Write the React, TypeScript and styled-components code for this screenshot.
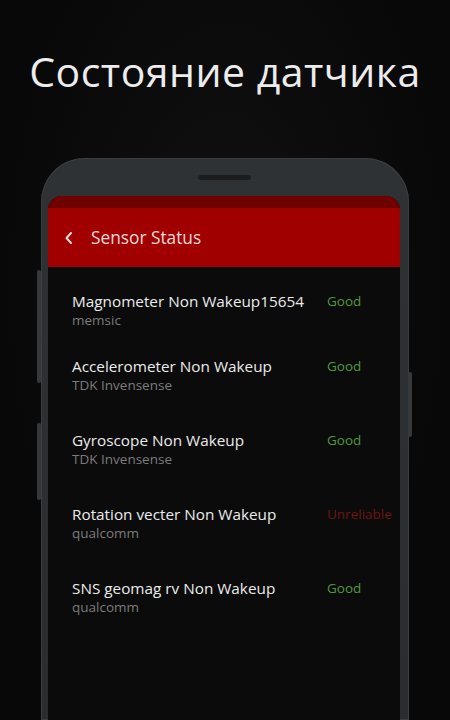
import styled, { createGlobalStyle } from 'styled-components';

const GlobalStyle = createGlobalStyle`
  html, body {
    margin: 0;
    padding: 0;
    background: #080808;
  }
  * {
    box-sizing: border-box;
  }
`

const Page = styled.div`
  width: 450px;
  height: 720px;
  overflow: hidden;
  background: radial-gradient(ellipse at 50% 40%, #111 0%, #080808 70%);
  display: flex;
  flex-direction: column;
  align-items: center;
  font-family: 'Open Sans', 'Noto Sans', sans-serif;
`

const Headline = styled.h1`
  margin: 0;
  padding-top: 49px;
  height: 158px;
  font-family: 'Open Sans', 'Noto Sans', sans-serif;
  font-weight: 400;
  font-size: 41px;
  line-height: 44px;
  color: #ececec;
  letter-spacing: 0.5px;
  white-space: nowrap;
`

const PhoneFrame = styled.div`
  position: relative;
  width: 368px;
  flex: 1;
  padding: 38px 9px 0 7px;
  border-radius: 44px 44px 0 0;
  background: linear-gradient(180deg, #2e3234 0%, #2a2d2f 100%);
  box-shadow: inset 0 0 0 1px #3a3e40;
`

const SideButton = styled.div<{ $side: 'left' | 'right'; $top: number; $height: number }>`
  position: absolute;
  ${p => (p.$side === 'left' ? 'left: -4px;' : 'right: -3px;')}
  top: ${p => p.$top}px;
  width: 4px;
  height: ${p => p.$height}px;
  border-radius: 2px;
  background: #35393b;
`

const Speaker = styled.div`
  position: absolute;
  top: 17px;
  left: 157px;
  width: 53px;
  height: 5px;
  border-radius: 3px;
  background: #1b1d1e;
`

const Screen = styled.div`
  height: 100%;
  border-radius: 14px 14px 0 0;
  overflow: hidden;
  background: #0b0b0b;
  display: flex;
  flex-direction: column;
`

const StatusBar = styled.div`
  height: 12px;
  background: #6f0000;
`

const AppBar = styled.div`
  height: 59px;
  background: #a00000;
  display: flex;
  align-items: center;
  gap: 17px;
  padding-left: 16px;
  color: #f6dada;
`

const AppTitle = styled.span`
  font-family: 'Open Sans', 'Noto Sans', sans-serif;
  font-size: 17.3px;
  font-weight: 400;
`

const List = styled.div`
  padding-top: 24px;
  display: flex;
  flex-direction: column;
`

const Row = styled.div`
  display: flex;
  align-items: flex-start;
  height: 74px;
  padding-left: 24px;

  &:first-child {
    height: 65px;
  }
`

const Info = styled.div`
  width: 255px;
  display: flex;
  flex-direction: column;
`

const Name = styled.div`
  font-size: 15.3px;
  line-height: 20px;
  color: #ebebeb;
  white-space: nowrap;
`

const Vendor = styled.div`
  font-size: 13.5px;
  line-height: 18px;
  color: #7c7c7c;
`

const Status = styled.div<{ $ok: boolean }>`
  font-size: 13.5px;
  line-height: 20px;
  white-space: nowrap;
  color: ${p => (p.$ok ? '#4f9a3c' : '#6e1515')};
`

const Chevron = () => (
  <svg width="10" height="14" viewBox="0 0 10 14">
    <path d="M7 2 L2.5 7 L7 12" stroke="#f6dada" strokeWidth="2" fill="none" strokeLinecap="round" strokeLinejoin="round" />
  </svg>
)

const sensors = [
  { name: 'Magnometer Non Wakeup15654', vendor: 'memsic', status: 'Good' },
  { name: 'Accelerometer Non Wakeup', vendor: 'TDK Invensense', status: 'Good' },
  { name: 'Gyroscope Non Wakeup', vendor: 'TDK Invensense', status: 'Good' },
  { name: 'Rotation vecter Non Wakeup', vendor: 'qualcomm', status: 'Unreliable' },
  { name: 'SNS geomag rv Non Wakeup', vendor: 'qualcomm', status: 'Good' },
]

const App = () => {
  return (
    <Page>
      <GlobalStyle />
      <Headline>Состояние датчика</Headline>
      <PhoneFrame>
        <SideButton $side="left" $top={112} $height={113} />
        <SideButton $side="left" $top={265} $height={77} />
        <SideButton $side="right" $top={214} $height={65} />
        <Speaker />
        <Screen>
          <StatusBar />
          <AppBar>
            <Chevron />
            <AppTitle>Sensor Status</AppTitle>
          </AppBar>
          <List>
            {sensors.map(s => (
              <Row key={s.name}>
                <Info>
                  <Name>{s.name}</Name>
                  <Vendor>{s.vendor}</Vendor>
                </Info>
                <Status $ok={s.status === 'Good'}>{s.status}</Status>
              </Row>
            ))}
          </List>
        </Screen>
      </PhoneFrame>
    </Page>
  );
};

export default App;
